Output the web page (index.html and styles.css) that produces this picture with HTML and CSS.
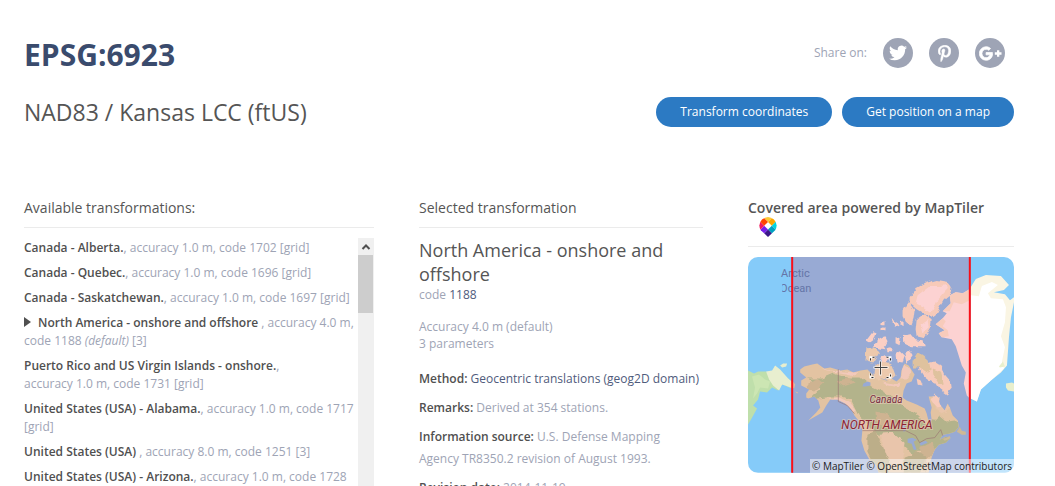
FILE: index.html
```html
<!DOCTYPE html>
<html lang="en">
<head>
<meta charset="utf-8">
<title>EPSG:6923</title>
<link rel="stylesheet" href="styles.css">
</head>
<body>
<div class="page">
  <header class="head">
    <h1 class="code">EPSG:6923</h1>
    <div class="share">
      <span class="share-label">Share on:</span>
      <a class="social" href="#" aria-label="Twitter"><svg width="18" height="18" viewBox="0 0 24 24"><path d="M23.953 4.57a10 10 0 01-2.825.775 4.958 4.958 0 002.163-2.723c-.951.555-2.005.959-3.127 1.184a4.92 4.92 0 00-8.384 4.482C7.69 8.095 4.067 6.13 1.64 3.162a4.822 4.822 0 00-.666 2.475c0 1.71.87 3.213 2.188 4.096a4.904 4.904 0 01-2.228-.616v.06a4.923 4.923 0 003.946 4.827 4.996 4.996 0 01-2.212.085 4.936 4.936 0 004.604 3.417 9.867 9.867 0 01-6.102 2.105c-.39 0-.779-.023-1.17-.067a13.995 13.995 0 007.557 2.209c9.053 0 13.998-7.496 13.998-13.985 0-.21 0-.42-.015-.63A9.935 9.935 0 0024 4.59z"/></svg></a>
      <a class="social" href="#" aria-label="Pinterest"><svg width="13" height="17" viewBox="0 0 384 512"><path stroke="#fff" stroke-width="14" d="M204 6.500C101.400 6.500 0 74.900 0 185.600 0 256 39.600 296 63.600 296c9.900 0 15.600-27.600 15.600-35.400 0-9.300-23.700-29.100-23.700-67.800 0-80.400 61.200-137.400 140.400-137.400 68.100 0 118.500 38.700 118.500 109.800 0 53.100-21.300 152.700-90.300 152.700-24.900 0-46.200-18-46.200-43.800 0-37.800 26.400-74.400 26.400-113.400 0-66.200-93.900-54.200-93.900 25.800 0 16.800 2.100 35.400 9.600 50.700-13.800 59.400-42 147.900-42 209.100 0 18.900 2.700 37.500 4.500 56.400 3.400 3.800 1.700 3.400 6.900 1.500 50.400-69 48.600-82.500 71.400-172.800 12.300 23.400 44.100 36 69.300 36 106.200 0 153.900-103.500 153.900-196.800C384 71.300 298.200 6.500 204 6.500z"/></svg></a>
      <a class="social" href="#" aria-label="Google Plus"><svg width="23" height="23" viewBox="0 0 24 24"><path stroke="#fff" stroke-width=".8" d="M7.400 11v2.400h3.970c-.16 1.029-1.200 3.020-3.970 3.020-2.390 0-4.340-1.979-4.340-4.420 0-2.440 1.950-4.420 4.340-4.420 1.360 0 2.270.58 2.790 1.080l1.900-1.830C10.870 5.690 9.290 5 7.400 5c-3.870 0-7 3.130-7 7s3.130 7 7 7c4.040 0 6.721-2.840 6.721-6.840 0-.46-.051-.81-.111-1.160z"/><path d="M23.500 10.800h-2.300V8.500h-2.400v2.300h-2.300v2.400h2.300v2.300h2.400v-2.300h2.300z"/></svg></a>
    </div>
  </header>
  <div class="sub">
    <h2 class="name">NAD83 / Kansas LCC (ftUS)</h2>
    <div class="actions">
      <a class="btn" href="#">Transform coordinates</a>
      <a class="btn" href="#">Get position on a map</a>
    </div>
  </div>
  <main class="columns">
    <section>
      <h3 class="heading">Available transformations:</h3>
      <div class="scroller">
        <ul class="list">
          <li><a href="#">Canada - Alberta.</a>, accuracy&nbsp;1.0&nbsp;m, code 1702 [grid]</li>
          <li><a href="#">Canada - Quebec.</a>, accuracy&nbsp;1.0&nbsp;m, code 1696 [grid]</li>
          <li><a href="#">Canada - Saskatchewan.</a>, accuracy&nbsp;1.0&nbsp;m, code 1697 [grid]</li>
          <li class="current"><a href="#">North America - onshore and offshore</a> , accuracy&nbsp;4.0&nbsp;m, code 1188 <i>(default)</i> [3]</li>
          <li><a href="#">Puerto Rico and US Virgin Islands - onshore.</a>, accuracy&nbsp;1.0&nbsp;m, code 1731 [grid]</li>
          <li><a href="#">United States (USA) - Alabama.</a>, accuracy&nbsp;1.0&nbsp;m, code 1717 [grid]</li>
          <li><a href="#">United States (USA)</a> , accuracy&nbsp;8.0&nbsp;m, code 1251 [3]</li>
          <li><a href="#">United States (USA) - Arizona.</a>, accuracy&nbsp;1.0&nbsp;m, code 1728 [grid]</li>
        </ul>
        <div class="bar">
          <svg class="bar-up" viewBox="0 0 16 17"><path d="M4.500 11 8 7.500l3.500 3.500" fill="none" stroke="#505050" stroke-width="2"/></svg>
          <div class="thumb"></div>
        </div>
      </div>
    </section>
    <section>
      <h3 class="heading">Selected transformation</h3>
      <h4 class="selected">North America - onshore and offshore</h4>
      <p class="meta">code <a href="#">1188</a></p>
      <p class="accuracy">Accuracy 4.0 m (default)<br>3 parameters</p>
      <p class="fact"><b>Method:</b> <a href="#">Geocentric translations (geog2D domain)</a></p>
      <p class="fact"><b>Remarks:</b> Derived at 354 stations.</p>
      <p class="fact"><b>Information source:</b> U.S. Defense Mapping Agency TR8350.2 revision of August 1993.</p>
      <p class="fact"><b>Revision date:</b> 2014-11-19</p>
    </section>
    <section>
      <h3 class="heading powered">Covered area powered by MapTiler
        <a class="logo" href="#" aria-label="MapTiler"><svg width="18" height="20" viewBox="0 0 18 20">
          <clipPath id="pin"><path d="M9 20 1.800 13.200A8.500 8.800 0 0 1 3 2.500Q9-2.500 15 2.500A8.500 8.800 0 0 1 16.200 13.200Z"/></clipPath>
          <g clip-path="url(#pin)"><g transform="translate(9 8.800) rotate(45)">
            <path fill="#fbc935" d="M-9-9h6.300v6.300H-9z"/><path fill="#fba600" d="M-2.700-9h5.400v6.300h-5.400z"/>
            <path fill="#00d5df" d="M2.700-9H9v6.300H2.700z"/><path fill="#00a1c1" d="M2.700-2.700H9v5.400H2.700z"/>
            <path fill="#3a1888" d="M2.700 2.700H9V9H2.700z"/><path fill="#761fe8" d="M-2.700 2.700h5.400V9h-5.400z"/>
            <path fill="#f1175d" d="M-9 2.700h6.300V9H-9z"/><path fill="#ff4500" d="M-9-2.700h6.300v5.400H-9z"/>
          </g></g></svg></a>
      </h3>
      <div class="map">
        <svg class="map-art" viewBox="0 0 265 215" role="img" aria-label="Map of North America">
          <defs>
            <clipPath id="ocean"><path d="M34 20h60v16H34z"/></clipPath>
            <path id="mainland" d="M52 112L56 109 64 107 69 106 76 111 82 110 92 113 99 112 105 115 112 113 119 112 125 118 132 121 138 123 143 121 148 124 152 120 153 113 156 106 160 108 166 117 163 124 158 126 155 133 154 140 158 143 168 147 176 151 178 156 180 164 183 163 182 155 183 150 181 143 180 139 186 139 190 141 191 147 196 153 199 146 201 150 204 158 209 163 210 169 206 174 200 176 194 177 191 182 197 179 202 180 197 185 190 187 186 192 184 197 182 203 180 215H130L128 208 121 202 116 193 113 183 114 172 110 163 106 158 103 152 97 146 89 142 82 142 78 148 74 155 67 159 60 163 68 155 72 150 70 143 66 139 60 141 58 140 58 136 61 132 53 128 53 123 58 120 52 115z"/>
            <clipPath id="land"><use href="#mainland"/></clipPath>
            <filter id="terrain" x="-5%" y="-5%" width="110%" height="110%"><feTurbulence type="fractalNoise" baseFrequency=".14" numOctaves="2" seed="4"/><feDisplacementMap in="SourceGraphic" scale="5" xChannelSelector="R" yChannelSelector="G"/></filter>
          </defs>
          <path fill="#85cbf9" d="M0 0h265v215H0z"/>
          <path fill="#bfdfab" d="M0 113L6 116 10 114 18 114 20 117 26 113 30 115 34 117 40 121 43 124V131L37 128 34 127 30 133 24 130 19 135 12 134 10 142 5 148 9 151 3 162 0 167z"/>
          <path fill="#e8eecf" d="M18 114L24 113 27 108 32 112 40 121 47 127 45 131 37 128 34 127 31 133 25 128 21 122zM32 108l3-2 4 0-1 3-4 1z"/>
          <path fill="#cce6b3" d="M4 119L11 117 17 122 22 124 20 131 12 130 9 136 5 141 7 130z"/>
          <path fill="#98aad4" d="M44 0h177v215H44z"/>
          <path fill="#dcbca6" d="M44 123l3 4-1 4-2-1zM47 134l3 1-1 1z"/>
          <use href="#mainland" fill="#e3c3a2"/>
          <g clip-path="url(#land)"><g filter="url(#terrain)">
            <path fill="#b3b38b" d="M60 121L73 121 85 116 98 120 112 120 123 129 134 134 144 140 151 147 160 152 170 158 179 168 187 161 191 157 199 164 207 163 213 170 208 180 192 189 181 193 170 193 165 198 155 188 145 185 132 178 124 173 110 158 102 142 94 139 83 139 70 141 62 145 64 138 72 131z"/>
            <path fill="#ceb391" d="M59 125l10-4 6 5-8 7-7-1zM88 124l13-4 6 5-12 4zM127 154l10 2 9 8-9 6-9-4zM172 189l12-4 4 7-9 8-2 15-8-6z"/>
            <path fill="#bcae89" d="M119 176l8-3 6 14 10 11-4 20-11-5-9-18zM156 200l14-6 8 6-7 16h-16z"/>
            <path fill="#e9c5ab" d="M131 176l13-1 12 10-3 20-8 5-7-13zM187 142l11 4 3 5-6 6-8-5z"/>
            <path fill="#f2c9bb" d="M74 110l7 3 14 1 14 1-2 3-15-3-12-1zM80 141l11-1 10 5 6 8-3 2-8-8zM134 124l10 2 9-1-3 5-10-2zM153 108l6 1 4 6-5 7-5 0z"/>
          </g>
            <path fill="#98aad4" d="M115 126l4-2 3 1 0 3-5 1-3 0zM129 142l3-1 1 2-4 1zM159 181l5-1 4 2-3 2 3 8-3 0-2-6-4-1zM171 185l6-2 2 2-7 3zM154 167l2-1 1 7-2 1zM143 141l3-1-1 3z"/>
          </g>
          <path d="M90 112v32l9 4 7 8M114 173h43l10 5 4 7 7-4 8-1 6-8 2 6" fill="none" stroke="#986f70" stroke-width=".6"/>
          <path fill="#ceb895" d="M208 174l3-5 2 4 4 1 0 3-4 0zM194 181l4-1 3-2 0 3-5 2z"/>
          <g filter="url(#terrain)">
            <path fill="#ecc9ad" d="M117 103l1-12 8-1 5 4-3 5-4 6zM126 116l1-8 7-5 9 4 4 11-6 5-8-2-5 1z"/>
            <path fill="#fbcfc4" d="M118 83l6-8 3 1-2 6-4 3zM125 89l5-5 4 3 3 5-7-1zM133 65l3-1 0 4-3 0zM133 71l3-1 0 3-3 1zM143 62l5 3 2 4-4-1zM152 64l3 2 0 4-3-2zM129 83l7-4 3 6-2 4-8-1zM147 80l5 1-1 7-4-2zM155 78l6-2 6 7 8 1 1 6-13 0-7-3zM147 97l4-3 5 5-2 7-6-1zM156 97l5-4 3 5-6 8zM131 100l5-3 5 4-2 4-5-1zM138 91l5-1 1 4-5 0z"/>
            <path fill="#f7cab9" d="M162 39L168 31 177 26 188 23 199 25 203 30 202 36 195 42 191 49 187 57 183 60 176 57 168 52 162 47zM155 53l5-8 6 8-1 8-2 6-5-1-3-6zM168 62l7-5 8 6-1 8-6 10-8-2-1-7z"/>
            <path fill="#fcd2d2" d="M169 38l12-9 10 0 7-1 1 4-11 12-5 12-8-6-8-4zM172 68l7-5 1 7-6 6z"/>
            <path fill="#f7cbbb" d="M170 111L178 106 187 104 193 108 196 117 202 124 203 131 198 137 191 132 187 126 180 123 175 119zM182 142l4-6 5 4-1 4 3 4-4 2-5-5zM168 121l4 2 2 5-5-1z"/>
            <path fill="#dfc29e" d="M164 103L169 95 175 99 180 103 182 112 177 115 170 110 164 110zM184 111l8 3 3 12-4 1-6-9z"/>
          </g>
          <path fill="#fcd2d2" d="M201 38L207 35 214 36 221 32V141L218 138 215 126 217 115 213 108 207 89 203 82 193 80 190 76 196 73 187 67 194 61 198 56 194 54 202 46z"/>
          <path fill="#f7cbbb" d="M201 38L207 35 214 36 221 32V43L213 47 205 45 201 54 194 54 202 46zM187 67l7-6 3 3-3 5 5 4 1 6-7 1-3-4 6-3z"/>
          <path fill="#faf5e3" d="M222 30L227 22 237 18 252 19 260 28 255 33 245 35 256 37 261 43 265 40V45L262 60 260 80 258 108 252 115 242 123 232 132 228 144 222 141z"/>
          <path fill="#fff" d="M222 38L230 39 233 29 243 25 249 28 239 36 242 41 254 42 257 50 256 65 252 79 256 90 253 104 255 111 242 123 232 132 228 144 222 141z"/>
          <path fill="#e9efcd" d="M257 126l6-1 2 1v8l-6-1-2-3zM250 109l4-5 2 5-5 1z"/>
          <g font-family="Roboto, sans-serif" font-size="11" fill="#6475a7">
            <text x="33" y="20">Arctic</text><text x="32" y="35" clip-path="url(#ocean)">Ocean</text>
          </g>
          <path d="M44 0v215M221 0v215" stroke="#fa0f18" stroke-width="2"/>
          <g font-family="Roboto, sans-serif" font-style="italic" fill="#783044" stroke="#ecd0bd" stroke-width="2" stroke-opacity=".55" paint-order="stroke">
            <text x="121" y="145" font-size="10">Canada</text>
            <text x="93" y="171" font-size="12" fill="#8d2434">NORTH AMERICA</text>
          </g>
          <path d="M132 103v15M125 110h15" stroke="#fff" stroke-width="2"/>
          <path d="M132 104v13M126 110h13" stroke="#444" stroke-width="1"/>
          <path d="M122 103v-3h4M138 100h4v4M122 116v4h4M138 120h4v-4" fill="none" stroke="#fff" stroke-width="2"/>
          <path d="M122 103v-3h4M138 100h4v4M122 116v4h4M138 120h4v-4" fill="none" stroke="#222" stroke-width="1" stroke-dasharray="2 3"/>
        </svg>
        <div class="credit"><a href="#">© MapTiler</a> <a href="#">© OpenStreetMap contributors</a></div>
      </div>
    </section>
  </main>
</div>
</body>
</html>
```
FILE: styles.css
```css
* { box-sizing: border-box; }
body {
  margin: 0;
  background: #fff;
  color: #9ea4b5;
  font-family: "Open Sans", "Noto Sans", sans-serif;
  font-size: 12px;
  line-height: 18px;
}
h1, h2, h3, h4, p, ul { margin: 0; padding: 0; font-weight: 400; }
a { color: inherit; text-decoration: none; }
.page {
  display: flex;
  flex-direction: column;
  height: 100vh;
  overflow: hidden;
  padding: 34px 41px 0 24px;
}
.head, .sub { display: flex; justify-content: space-between; }
.code { color: #3a4b6d; font-size: 30px; line-height: 42px; font-weight: 700; }
.share { display: flex; align-items: center; gap: 16px; padding: 0 9px 4px 0; }
.social {
  display: flex;
  align-items: center;
  justify-content: center;
  width: 30px;
  height: 30px;
  border-radius: 50%;
  background: #9ea4b5;
}
.social svg { fill: #fff; }
.sub { align-items: center; margin-top: 19px; }
.name { color: #555; font-size: 23px; line-height: 34px; }
.actions { display: flex; gap: 10px; }
.btn {
  padding: 0 24px;
  border-radius: 15px;
  background: #2c7ac3;
  color: #fff;
  line-height: 30px;
}
.columns {
  display: grid;
  grid-template-columns: 350fr 284fr 266fr;
  grid-template-rows: minmax(0, 1fr);
  gap: 45px;
  flex: 1;
  min-height: 0;
  margin-top: 69px;
}
.columns section { display: flex; flex-direction: column; min-width: 0; min-height: 0; }
.heading {
  flex: none;
  padding-bottom: 9px;
  border-bottom: 1px solid #ebebeb;
  color: #555;
  font-size: 14px;
  line-height: 20px;
}
.scroller { display: flex; flex: 1; min-height: 0; margin-top: 10px; }
.list { flex: 1; overflow: hidden; padding-top: 1px; list-style: none; }
.list li { padding-right: 3px; margin-bottom: 7px; }
.list a, .fact b { color: #505050; font-weight: 600; }
.current::before {
  content: "";
  display: inline-block;
  margin-right: 7px;
  border: solid transparent;
  border-width: 5px 0 5px 7px;
  border-left-color: #505050;
}
.bar { width: 16px; background: #f0f0f0; }
.bar-up { display: block; width: 16px; height: 17px; }
.thumb { height: 58px; margin-right: 1px; background: #cdcdcd; }
.selected { margin-top: 10px; color: #555; font-size: 18px; line-height: 24px; }
.meta a, .fact a { color: #4f5b7c; }
.accuracy { margin: 14px 0 16px; line-height: 17px; }
.fact { margin-bottom: 7px; padding-right: 4px; line-height: 22px; }
.powered { font-weight: 600; line-height: 19px; }
.logo { display: block; width: 18px; height: 20px; margin-left: 11px; }
.logo svg { display: block; }
.map { position: relative; margin-top: 10px; border-radius: 10px; overflow: hidden; }
.map-art { display: block; width: 100%; }
.credit {
  position: absolute;
  right: 0;
  bottom: 0;
  padding: 0 2px;
  background: rgba(255, 255, 255, .5);
  color: #222;
  font-size: 10px;
  line-height: 14px;
  white-space: nowrap;
}
```
